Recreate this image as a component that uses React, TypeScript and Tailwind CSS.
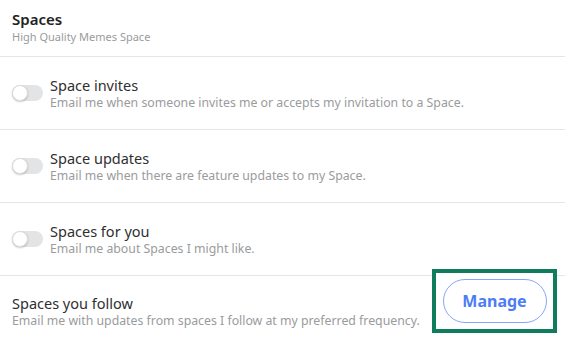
import React from "react";

function Toggle() {
  return (
    <div className="relative h-[16px] w-[31px] shrink-0 rounded-full bg-[#e3e4e6]">
      <div className="absolute left-0 top-[0px] h-[16px] w-[16px] rounded-full border border-[#dcdcdc] bg-white shadow-[0_1px_2px_rgba(0,0,0,0.2)]" />
    </div>
  );
}

function ToggleRow({ title, desc }: { title: string; desc: string }) {
  return (
    <div className="flex h-[73px] items-center gap-[7px] border-b border-[#e6e6e6] px-[12px]">
      <Toggle />
      <div className="flex flex-col">
        <div className="text-[14.5px] leading-[20px] text-[#2f2f30]">{title}</div>
        <div className="text-[12.3px] leading-[16px] text-[#9a9b9d]">{desc}</div>
      </div>
    </div>
  );
}

export default function App() {
  return (
    <div className="h-[342px] w-[565px] overflow-hidden bg-white" style={{ fontFamily: '"Noto Sans", "Open Sans", sans-serif' }}>
      <div className="flex h-[57px] flex-col border-b border-[#e6e6e6] px-[12px] pt-[9px]">
        <div className="text-[15px] font-semibold leading-[20px] text-[#222]">Spaces</div>
        <div className="text-[11px] leading-[15px] text-[#9a9b9d]">High Quality Memes Space</div>
      </div>
      <ToggleRow title="Space invites" desc="Email me when someone invites me or accepts my invitation to a Space." />
      <ToggleRow title="Space updates" desc="Email me when there are feature updates to my Space." />
      <ToggleRow title="Spaces for you" desc="Email me about Spaces I might like." />
      <div className="flex items-start justify-between pl-[12px] pr-[8px]">
        <div className="flex flex-col pt-[17px]">
          <div className="text-[14.5px] leading-[20px] text-[#2f2f30]">Spaces you follow</div>
          <div className="text-[12.3px] leading-[16px] text-[#9a9b9d]">Email me with updates from spaces I follow at my preferred frequency.</div>
        </div>
        <div className="-mt-[7px] flex h-[64px] w-[125px] items-center justify-center border-4 border-[#0f7d5c] bg-white">
          <button className="h-[44px] w-[104px] rounded-full border border-[#86a6f8] text-[16px] font-bold text-[#4d7cf6]">
            Manage
          </button>
        </div>
      </div>
    </div>
  );
}
